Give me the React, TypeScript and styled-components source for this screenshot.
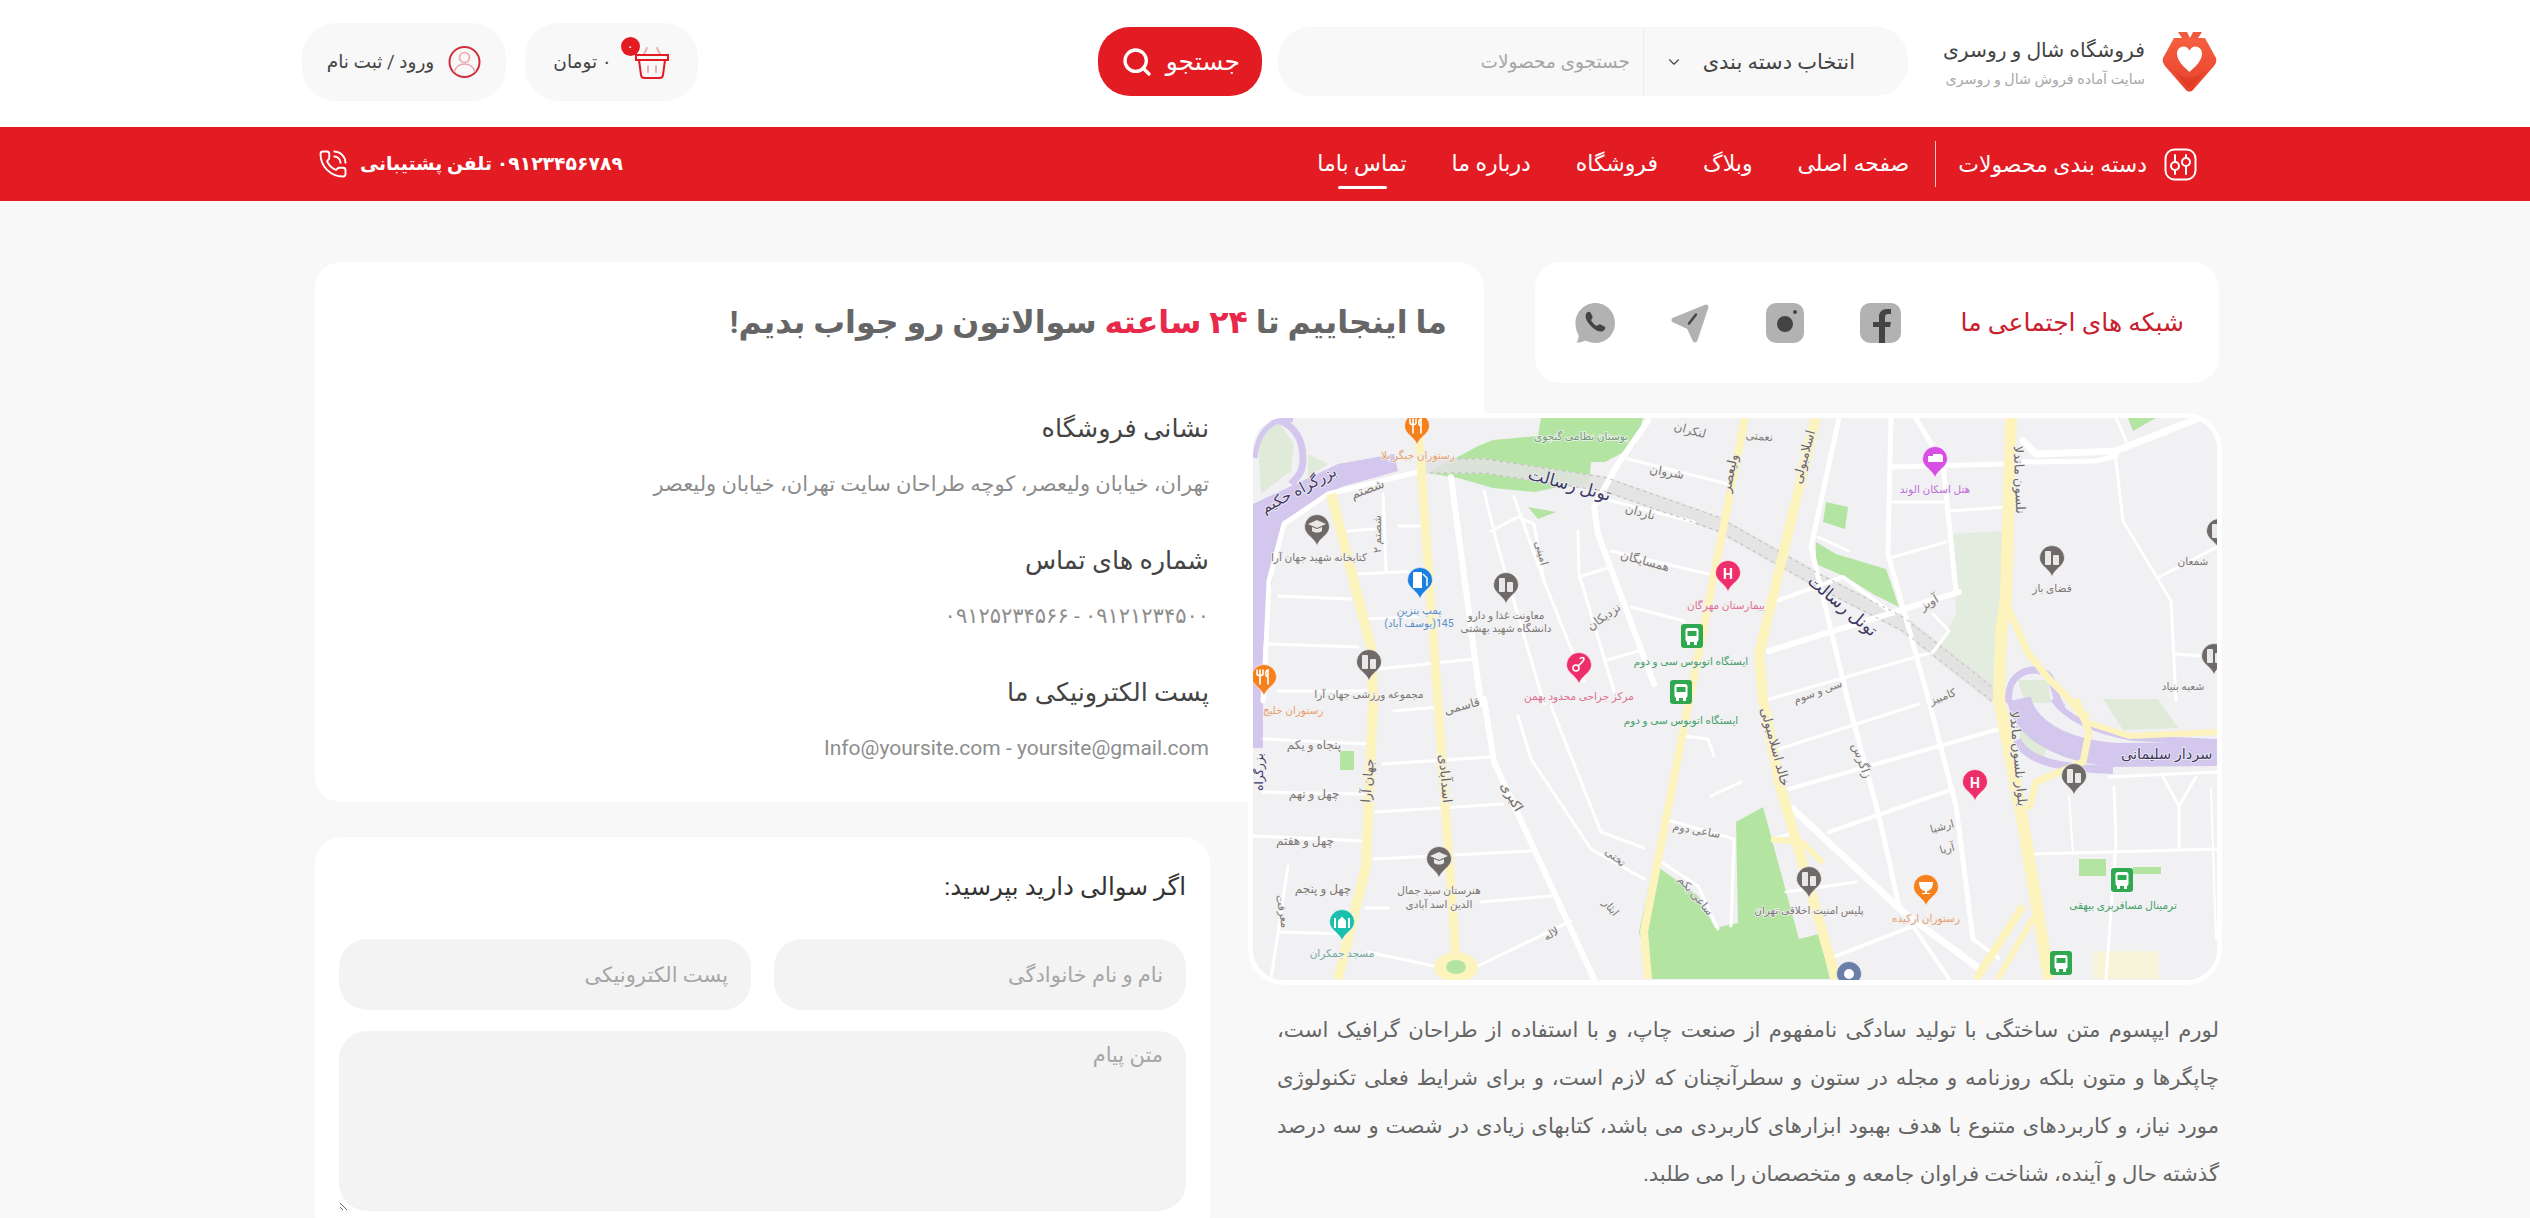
import React from 'react'
import styled, { createGlobalStyle } from 'styled-components'
import { ChevronDown, PhoneCall, Search } from 'lucide-react'

const RED = '#e31b23'
const FONT = `Roboto, "DejaVu Sans", sans-serif`

const GlobalStyle = createGlobalStyle`
  html, body {
    margin: 0;
    padding: 0;
    background: #f8f8f8;
    overflow-x: hidden;
  }
  * {
    box-sizing: border-box;
  }
  body {
    font-family: ${FONT};
    color: #333;
  }
  input::placeholder, textarea::placeholder {
    color: #a6a6a6;
    opacity: 1;
  }
`

const Page = styled.div`
  width: 2530px;
  direction: rtl;
`

const Header = styled.header`
  height: 127px;
  background: #fff;
  display: flex;
  align-items: center;
  padding: 0 313px 4px 302px;
`

const Brand = styled.div`
  display: flex;
  align-items: center;
  gap: 17px;
  width: 272px;

  svg {
    flex: none;
  }
`

const BrandText = styled.div`
  display: flex;
  flex-direction: column;
  gap: 8px;
  min-width: 0;
  white-space: nowrap;
`

const BrandName = styled.div`
  font-size: 20.300px;
  line-height: 26px;
  color: #444;
`

const BrandSub = styled.div`
  font-size: 14.300px;
  line-height: 16px;
  color: #a8a8a8;
`

const SearchBox = styled.div`
  width: 630px;
  height: 69px;
  margin-right: 37px;
  background: #f8f8f8;
  border-radius: 32px;
  display: flex;
  overflow: hidden;
`

const CategorySelect = styled.div`
  width: 265px;
  border-left: 1px solid #eeeeee;
  display: flex;
  align-items: center;
  justify-content: space-between;
  padding: 0 53px 0 21px;
  font-size: 21px;
  color: #444;
  white-space: nowrap;
`

const SearchInput = styled.input`
  flex: 1;
  min-width: 0;
  border: 0;
  outline: 0;
  background: transparent;
  padding: 0 13px;
  font: 18.500px ${FONT};
  direction: rtl;
`

const SearchButton = styled.button`
  width: 164px;
  height: 69px;
  margin-right: 16px;
  border: 0;
  border-radius: 32px;
  background: ${RED};
  color: #fff;
  display: flex;
  align-items: center;
  justify-content: space-between;
  padding: 0 22px 0 23px;
  font: 25px ${FONT};
`

const HeaderPills = styled.div`
  margin-right: auto;
  display: flex;
  gap: 19px;
`

const Pill = styled.div<{ $width: number; $gap: number }>`
  width: ${(p) => p.$width}px;
  height: 78px;
  border-radius: 34px;
  background: #f8f8f8;
  display: flex;
  align-items: center;
  justify-content: center;
  gap: ${(p) => p.$gap}px;
  font-size: 18.500px;
  color: #444;
  white-space: nowrap;
`

const CartWrap = styled.div`
  position: relative;
  width: 36px;
  height: 36px;
`

const CartBadge = styled.span`
  position: absolute;
  top: -7px;
  left: -13px;
  width: 19px;
  height: 19px;
  border-radius: 50%;
  background: ${RED};
  color: #fff;
  font-size: 13px;
  line-height: 19px;
  text-align: center;
`

const NavBar = styled.nav`
  height: 74px;
  background: ${RED};
  color: #fff;
  display: flex;
  align-items: center;
  padding: 0 333px 0 318px;
  font-size: 22px;
  white-space: nowrap;
`

const NavCategories = styled.div`
  display: flex;
  align-items: center;
  gap: 17px;
`

const NavDivider = styled.span`
  width: 1px;
  height: 46px;
  background: rgba(255, 255, 255, 0.75);
  margin: 0 22px 0 26px;
`

const NavLinks = styled.div`
  display: flex;
  gap: 45px;
`

const NavLink = styled.a<{ $active?: boolean }>`
  position: relative;
  line-height: 32px;

  ${(p) =>
    p.$active &&
    `
    &::after {
      content: '';
      position: absolute;
      bottom: -9px;
      left: 50%;
      width: 49px;
      height: 3px;
      margin-left: -24px;
      background: #fff;
      border-radius: 2px;
    }
  `}
`

const SupportPhone = styled.div`
  margin-right: auto;
  display: flex;
  align-items: center;
  gap: 12px;
  font-weight: 700;
  font-size: 18.800px;
`

const Main = styled.main`
  display: grid;
  grid-template-columns: 974px 895px;
  column-gap: 38px;
  justify-content: start;
  padding: 61px 308px 30px 0;
  align-items: start;
`

const RightColumn = styled.section`
  display: flex;
  flex-direction: column;
`

const LeftColumn = styled.section`
  display: flex;
  flex-direction: column;
  gap: 35px;
`

const SocialCard = styled.div`
  width: 684px;
  height: 121px;
  margin-right: 3px;
  background: #fff;
  border-radius: 26px;
  display: flex;
  align-items: center;
  padding-right: 35px;
`

const SocialTitle = styled.h3`
  margin: 0 0 0 60px;
  width: 223px;
  font-size: 25px;
  font-weight: 400;
  color: #c8202d;
  white-space: nowrap;
`

const SocialIcons = styled.div`
  display: flex;
  gap: 55px;
`

const MapFrame = styled.div`
  position: relative;
  z-index: 1;
  margin-top: 30px;
  height: 572px;
  border: 5px solid #fff;
  border-radius: 36px;
  overflow: hidden;
  background: #f1f1f3;

  svg {
    display: block;
  }
`

const MapLabel = styled.text`
  font-family: ${FONT};
  direction: rtl;
  paint-order: stroke;
  stroke: #f1f1f3;
  stroke-width: 1.6px;
`

const Lorem = styled.p`
  margin: 21px 0 0;
  padding: 0 3px 0 29px;
  font-size: 21.200px;
  line-height: 48px;
  color: #666;
  text-align: justify;
`

const HeroCard = styled.div`
  position: relative;
  margin-right: -274px;
  height: 540px;
  background: #fff;
  border-radius: 26px;
  padding: 0 37px 0 0;
`

const HeroTitle = styled.h1`
  margin: 0;
  height: 120px;
  display: flex;
  align-items: center;
  font-size: 31.700px;
  font-weight: 700;
  color: #666;
  white-space: nowrap;

  em {
    font-style: normal;
    color: #e8294a;
  }
`

const InfoList = styled.div`
  margin-top: 16px;
  padding-right: 238px;
  display: flex;
  flex-direction: column;
`

const InfoBlock = styled.div`
  height: 132px;
`

const InfoTitle = styled.h4`
  margin: 0 0 8px;
  font-size: 25.500px;
  line-height: 60px;
  font-weight: 400;
  color: #444;
`

const InfoText = styled.p`
  margin: 0;
  font-size: 21px;
  line-height: 36px;
  color: #8d8d8d;
`

const FormCard = styled.form`
  background: #fff;
  border-radius: 26px;
  padding: 24px 24px 30px;
  display: flex;
  flex-direction: column;
`

const FormTitle = styled.h4`
  margin: 0 0 26px;
  font-size: 24.500px;
  line-height: 52px;
  font-weight: 400;
  color: #333;
`

const FormRow = styled.div`
  display: grid;
  grid-template-columns: 1fr 1fr;
  gap: 23px;
  margin-bottom: 21px;
`

const TextField = styled.input`
  height: 71px;
  border: 0;
  outline: 0;
  border-radius: 28px;
  background: #f3f3f3;
  padding: 0 23px;
  font: 21px ${FONT};
  direction: rtl;
`

const MessageField = styled.textarea`
  height: 180px;
  border: 0;
  outline: 0;
  border-radius: 28px;
  background: #f3f3f3;
  padding: 8px 23px;
  font: 21px/32px ${FONT};
  direction: rtl;
  resize: vertical;
  display: block;
  width: 100%;
`

const Logo = () => (
  <svg width="55" height="60" viewBox="0 0 55 60">
    <defs>
      <linearGradient id="scarf" x1="0" y1="0" x2="0" y2="1">
        <stop offset="0" stopColor="#f4603f" />
        <stop offset="1" stopColor="#e8402c" />
      </linearGradient>
    </defs>
    <path d="M16 0h9l3 6 3-6h9l-6 9H22z" fill="#ef5a3c" />
    <path d="M12 6h31l11 20c1 3 0 5-2 8L31 58c-2 2-5 2-7 0L3 34c-2-3-3-5-2-8z" fill="url(#scarf)" />
    <path d="M12 38c6 6 12 8 16 8s10-2 16-8L31 54c-2 2-5 2-7 0z" fill="#d9371f" opacity=".55" />
    <path d="M27.5 40C22 35 15 29 15 21.500c0-4 3-7 6.500-7 2.500 0 4.500 1.500 6 4 1.500-2.500 3.500-4 6-4 3.500 0 6.500 3 6.500 7C40 29 33 35 27.500 40z" fill="#fff" />
  </svg>
)

const CartIcon = () => (
  <svg width="36" height="36" viewBox="0 0 36 36" fill="none" stroke={RED} strokeWidth="2" strokeLinecap="round">
    <path d="M10 10l3-6M26 10l-3-6" stroke="#efb0b2" />
    <path d="M2 11h32v5H2z" />
    <path d="M5 16l2 15c.2 2 1.500 3 3.500 3h15c2 0 3.300-1 3.500-3l2-15" />
    <path d="M14 22v6M22 22v6" stroke="#efb0b2" />
  </svg>
)

const UserIcon = () => (
  <svg width="33" height="34" viewBox="0 0 33 34" fill="none">
    <circle cx="16.500" cy="17" r="15" stroke="#d02c3a" strokeWidth="2" />
    <circle cx="16.500" cy="12.500" r="5" stroke="#eea8ac" strokeWidth="1.600" />
    <path d="M6 27c2-6 6-8 10.500-8S25 21 27 27" stroke="#eea8ac" strokeWidth="1.600" />
  </svg>
)

const SlidersIcon = () => (
  <svg width="33" height="33" viewBox="0 0 33 33" fill="none" stroke="#fff" strokeWidth="2" strokeLinecap="round">
    <rect x="1.500" y="1.500" width="30" height="30" rx="9" />
    <path d="M11 7v6M11 23v3M22 7v2M22 19v7" />
    <circle cx="11" cy="18" r="4" />
    <circle cx="22" cy="14" r="4" />
  </svg>
)

const WhatsappIcon = () => (
  <svg width="40" height="40" viewBox="0 0 40 40">
    <path d="M20.500 0C31.500 0 40 9 40 20s-8.500 20-19.500 20c-4 0-7-1-10-2.500-2 1-6 2.500-9 2 1.500-2 2.500-5 2-7.500C1.500 29 .5 24.500.5 20 .5 9 9.500 0 20.500 0z" fill="#b2b2b2" />
    <path d="M11 11c1-2 3.500-3 4.500-1.500l2 4c.5 1-.5 2.500-1.500 3.500 1 2.500 3.500 5 6 6 1-1 2.500-2 3.500-1.500l4 2c1.500 1 .5 3.500-1.500 4.500-3 1.500-6.500 0-10.500-3.500C12.500 20 9.500 15 11 11z" fill="#444" />
  </svg>
)

const TelegramIcon = () => (
  <svg width="40" height="40" viewBox="0 0 40 40">
    <path d="M4 17L36 4 25 37l-6-13z" fill="#b2b2b2" stroke="#b2b2b2" strokeWidth="5" strokeLinejoin="round" />
    <path d="M19 20.500l7-9" stroke="#444" strokeWidth="2.400" strokeLinecap="round" />
  </svg>
)

const InstagramIcon = () => (
  <svg width="40" height="40" viewBox="0 0 40 40">
    <rect x="1" width="38" height="40" rx="10" fill="#b2b2b2" />
    <circle cx="20" cy="21" r="8" fill="#444" />
    <circle cx="30" cy="9" r="2" fill="#444" />
  </svg>
)

const FacebookIcon = () => (
  <svg width="41" height="40" viewBox="0 0 41 40">
    <rect width="41" height="40" rx="10" fill="#b2b2b2" />
    <path d="M19 40V24h-6v-5h6v-5c0-5 3-8 8-8h4v5h-3c-2 0-3 1-3 3v5h6l-1 5h-5v16z" fill="#444" />
  </svg>
)

// map data, in px of the map box (964 x 562)
const purple = '#d3c7ee'
const yellow = '#fcf3bd'
const green = '#b4e4a2'
const paleGreen = '#dfead8'

const greens: [string, string][] = [
  ['288,0 390,0 382,28 352,44 338,44 336,66 310,68 282,74 240,70 205,60 175,55 225,28 240,22 285,18', green],
  ['275,89 303,94 285,101', green],
  ['573,84 595,89 592,111 570,104', green],
  ['563,124 583,136 633,151 646,189 620,176 593,159 563,146', green],
  ['875,0 903,0 880,13', green],
  ['87,333 101,333 101,352 87,352', green],
  ['401,446 445,478 462,510 485,505 483,404 510,389 546,521 566,516 577,561 398,561 386,514', green],
  ['826,441 853,441 853,458 826,458', green],
  ['880,449 908,449 908,456 880,456', green],
  ['700,116 750,113 746,203 746,283 683,236 703,196', '#e2ecdf'],
  ['5,19 25,3 41,26 38,53 8,76', paleGreen],
  ['55,36 75,46 55,59', paleGreen],
  ['766,300 800,318 790,340 768,335', paleGreen],
  ['850,281 905,281 925,310 870,312', paleGreen],
  ['840,533 906,533 906,561 840,561', '#f6f3d8'],
  ['765,262 795,262 798,285 772,285', paleGreen],
]

const purples = ['0,86 85,46 141,36 145,53 88,69 30,103 20,156 10,230 10,330 0,330']

const purpleLines: [string, number][] = [
  ['M8 0C40 0 50 20 50 40C50 55 45 58 38 66', 7],
  ['M2 40C4 16 16 0 40 2', 5],
  ['M756 285C752 255 780 245 795 257C803 265 800 280 810 290', 7],
  ['M766 281C772 310 805 332 862 337L964 336', 24],
  ['M800 281C812 298 835 312 880 320L964 324', 6],
  ['M764 322C775 345 810 350 860 352', 8],
]

const yellows: [string, number][] = [
  ['78,76 118,229 120,286 113,448 85,561', 10],
  ['166,20 185,286 203,540', 9],
  ['492,0 438,273 391,514 395,561', 8],
  ['563,0 506,236 510,281 526,364 583,561', 10],
  ['758,0 753,179 748,215 746,281 769,400 796,561', 12],
  ['753,185 775,235 795,260 835,300', 7],
  ['816,281 833,304 876,318 964,314', 6],
  ['823,281 836,314 830,344 783,364 776,391', 7],
  ['723,561 770,488', 8],
  ['745,561 780,500', 6],
  ['518,421 550,425 570,445', 6],
]

const roads: [string, number][] = [
  ['165,54 75,76 31,106 16,163 13,229 10,283', 5],
  ['198,59 228,286 231,281 241,344 341,561', 6],
  ['231,73 245,129 291,286', 3],
  ['265,298 278,341 338,431 391,461', 3],
  ['261,79 291,163 331,263', 3],
  ['298,288 348,414 391,430', 3],
  ['238,113 265,99 281,106 291,163', 3],
  ['395,3 365,46 341,89 345,116 401,266', 6],
  ['325,113 326,156 361,273', 3],
  ['375,41 475,66', 3],
  ['351,81 441,104', 3],
  ['358,133 455,156', 3],
  ['326,159 358,149', 3],
  ['378,189 431,203', 3],
  ['351,243 385,233', 3],
  ['95,113 121,111', 3],
  ['146,108 168,108', 3],
  ['130,76 133,153', 3],
  ['103,156 168,153', 3],
  ['26,178 98,181', 3],
  ['15,226 105,229', 3],
  ['125,251 221,241', 3],
  ['108,201 165,199', 3],
  ['25,273 115,273', 3],
  ['11,321 115,326', 3],
  ['130,346 237,339', 3],
  ['10,374 110,376', 3],
  ['123,394 250,386', 3],
  ['0,418 110,423', 3],
  ['121,441 278,433', 3],
  ['113,490 135,490', 3],
  ['228,484 298,478', 3],
  ['26,514 98,516', 3],
  ['35,448 18,561', 3],
  ['115,534 181,548', 3],
  ['225,548 318,503', 3],
  ['141,293 185,289', 3],
  ['411,401 481,421 478,508', 3],
  ['458,378 488,364', 3],
  ['408,444 445,468 465,511', 3],
  ['431,318 455,321 461,338', 3],
  ['586,0 558,129 595,283 626,398 646,488', 5],
  ['638,0 635,136 676,283 703,388 720,521', 5],
  ['663,0 690,46 703,173', 5],
  ['640,49 750,46', 5],
  ['640,84 690,84', 3],
  ['696,93 753,89', 3],
  ['640,139 693,124', 3],
  ['516,233 706,174', 6],
  ['523,183 590,159 640,196', 4],
  ['565,119 596,133', 3],
  ['680,196 696,213 680,234 510,283', 3],
  ['526,331 666,286', 3],
  ['536,371 746,311', 4],
  ['576,414 700,371', 4],
  ['520,421 536,416', 3],
  ['540,391 650,494 723,548', 7],
  ['583,538 660,508', 4],
  ['533,474 603,464', 3],
  ['660,508 696,561', 4],
  ['720,521 745,540', 4],
  ['770,23 783,36 863,33 946,0', 7],
  ['770,44 843,43 863,38', 5],
  ['863,43 870,103 918,183 923,283', 3],
  ['863,0 873,23', 3],
  ['906,159 964,129', 3],
  ['923,236 950,238', 3],
  ['781,436 964,431', 3],
  ['816,378 820,436', 2],
  ['861,369 863,424 853,561', 3],
  ['958,371 963,521', 2],
  ['856,359 964,354', 3],
  ['910,359 926,388 943,359', 3],
  ['926,388 926,431', 3],
]

type LabelData = [string, number, number, number, number, string]
const DARK = '#3f3763'
const GREY = '#7d7773'
const labels: LabelData[] = [
  ['رستوران جیگر بلا', 165, 41, 0, 10.5, '#e6a06c'],
  ['بوستان نظامی گنجوی', 328, 22, 0, 10.5, '#6f9a70'],
  ['لنکران', 436, 16, 15, 12, GREY],
  ['شروان', 413, 58, 10, 12, GREY],
  ['تونل رسالت', 315, 72, 15, 17, DARK],
  ['ناردان', 386, 98, 15, 12, GREY],
  ['همسایگان', 391, 147, 15, 12, GREY],
  ['نزدیکان', 353, 202, -35, 12, GREY],
  ['امینی', 285, 136, 75, 11, GREY],
  ['معاونت غذا و دارو', 253, 201, 0, 10.5, GREY],
  ['دانشگاه شهید بهشتی', 253, 214, 0, 10.5, GREY],
  ['پمپ بنزین', 166, 196, 0, 10.5, '#5b8fc7'],
  ['145(یوسف آباد)', 166, 209, 0, 10.5, '#5b8fc7'],
  ['کتابخانه شهید جهان آرا', 66, 143, 0, 10.5, GREY],
  ['شصتم', 116, 75, -20, 13, GREY],
  ['شصتم ۲', 128, 116, -90, 11, GREY],
  ['بزرگراه حکیم', 48, 76, -28, 15, DARK],
  ['مجموعه ورزشی جهان آرا', 116, 280, 0, 10.5, GREY],
  ['مرکز جراحی محدود بهمن', 326, 282, 0, 10.5, '#e0708f'],
  ['بیمارستان مهرگان', 473, 191, 0, 10.5, '#e0708f'],
  ['ایستگاه اتوبوس سی و دوم', 438, 247, 0, 10.5, '#45a06a'],
  ['ایستگاه اتوبوس سی و دوم', 428, 306, 0, 10.5, '#45a06a'],
  ['ولیعصر', 481, 56, -78, 13, '#6d655c'],
  ['اسلامبولی', 555, 40, -75, 13, '#6d655c'],
  ['نعمتی', 506, 22, 5, 11, GREY],
  ['هتل اسکان الوند', 682, 75, 0, 10.5, '#c06fd6'],
  ['تونل رسالت', 586, 192, 40, 17, DARK],
  ['آویز', 678, 188, -30, 12, GREY],
  ['فضای باز', 799, 174, 0, 10.5, GREY],
  ['سی و سوم', 566, 277, -20, 11, GREY],
  ['نلسون ماندلا', 762, 62, 88, 13, '#6d655c'],
  ['جهان آرا', 119, 363, -85, 13, '#6d655c'],
  ['اسدآبادی', 188, 361, 85, 13, '#6d655c'],
  ['اکبری', 255, 381, 60, 13, '#6d655c'],
  ['پنجاه و یکم', 61, 331, 0, 12, GREY],
  ['چهل و نهم', 61, 380, 0, 12, GREY],
  ['چهل و هفتم', 52, 427, 0, 12, GREY],
  ['چهل و پنجم', 70, 475, 0, 12, GREY],
  ['معرفت', 26, 494, 80, 11, GREY],
  ['قاسمی', 210, 292, -15, 12, GREY],
  ['هنرستان سید جمال', 186, 476, 0, 10.5, GREY],
  ['الدین اسد آبادی', 186, 490, 0, 10.5, GREY],
  ['مسجد جمکران', 89, 539, 0, 10.5, '#72aaa2'],
  ['لاله', 300, 519, -30, 11, GREY],
  ['ایثار', 355, 492, 50, 11, GREY],
  ['تختی', 360, 442, 40, 11, GREY],
  ['ساعی یکم', 440, 480, 50, 11, GREY],
  ['ساعی دوم', 443, 416, 10, 11, GREY],
  ['رستوران خلیج', 40, 296, 0, 10.5, '#e6a06c'],
  ['خالد اسلامبولی', 518, 330, 75, 13, '#6d655c'],
  ['بلوار نلسون ماندلا', 761, 341, 85, 13, '#6d655c'],
  ['زاگرس', 605, 344, 70, 12, GREY],
  ['کامبیز', 691, 282, -20, 11, GREY],
  ['ارشیا', 690, 412, -15, 11, GREY],
  ['آریا', 695, 434, -15, 11, GREY],
  ['پلیس امنیت اخلاقی تهران', 556, 496, 0, 10.5, GREY],
  ['رستوران ارکیده', 673, 504, 0, 10.5, '#e6a06c'],
  ['ترمینال مسافربری بیهقی', 870, 491, 0, 10.5, '#45a06a'],
  ['شمعان', 940, 147, 0, 10.5, GREY],
  ['شعبه بنیاد', 930, 272, 0, 10.5, GREY],
]

const Glyph = ({ kind }: { kind: string }) => {
  switch (kind) {
    case 'building':
      return (
        <g fill="#e8e8e8">
          <rect x="-7" y="-7" width="6" height="14" rx="1" />
          <rect x="1" y="-3" width="6" height="10" rx="1" />
        </g>
      )
    case 'cap':
      return (
        <g fill="#e8e8e8">
          <path d="M-9-3L0-7l9 4-9 4z" />
          <path d="M-5 0v4c3 2 7 2 10 0V0L0 2z" />
        </g>
      )
    case 'fork':
      return (
        <g stroke="#fff" strokeWidth="1.600" fill="none" strokeLinecap="round">
          <path d="M-4-7v14M-7-7v4c0 2 6 2 6 0v-4" />
          <path d="M4 7V-7c-3 1-3 6 0 7" />
        </g>
      )
    case 'gas':
      return (
        <g fill="#fff">
          <path d="M-7-7a1 1 0 0 1 1-1h7a1 1 0 0 1 1 1V8H-7z" />
          <path d="M3-6l4 4v8" stroke="#fff" strokeWidth="1.500" fill="none" />
        </g>
      )
    case 'bed':
      return <path d="M-7 3V-3h5v-2h7c2 0 3 1 3 3v5z" fill="#fff" />
    case 'mosque':
      return (
        <g fill="#fff">
          <path d="M-4 6V0C-4-3 0-4 0-6 0-4 4-3 4 0v6z" />
          <rect x="-8" y="-4" width="2" height="10" />
          <rect x="6" y="-4" width="2" height="10" />
        </g>
      )
    case 'cup':
      return <path d="M-7-5H7C7 2 3 4 1 4v2h3v1h-8V6h3V4C-3 4-7 2-7-5z" fill="#fff" />
    case 'steth':
      return (
        <g stroke="#fff" strokeWidth="1.600" fill="none">
          <circle cx="-3" cy="3" r="3" />
          <path d="M-1 1c3-3 6-5 6-7s-3-2-4 0" />
        </g>
      )
    default:
      return (
        <text y="5.500" textAnchor="middle" fontSize="14" fontWeight="700" fill="#fff" fontFamily="Roboto">
          H
        </text>
      )
  }
}

const pins: [number, number, string, string][] = [
  [164, 8, '#f5801e', 'fork'],
  [64, 109, '#6f6a68', 'cap'],
  [167, 162, '#1a7fe0', 'gas'],
  [253, 167, '#6f6a68', 'building'],
  [475, 155, '#ee2e6b', 'h'],
  [116, 244, '#6f6a68', 'building'],
  [11, 259, '#f5801e', 'fork'],
  [326, 247, '#ee2e6b', 'steth'],
  [682, 41, '#d84fe6', 'bed'],
  [799, 140, '#6f6a68', 'building'],
  [966, 113, '#6f6a68', 'building'],
  [961, 238, '#6f6a68', 'building'],
  [722, 364, '#ee2e6b', 'h'],
  [821, 358, '#6f6a68', 'building'],
  [186, 441, '#6f6a68', 'cap'],
  [89, 504, '#1bbfae', 'mosque'],
  [556, 461, '#6f6a68', 'building'],
  [673, 469, '#f5801e', 'cup'],
  [596, 556, '#6a7ea8', 'dot'],
]

const busStops: [number, number][] = [
  [439, 218],
  [428, 274],
  [869, 462],
  [808, 545],
]

const Pin = ({ x, y, color, kind }: { x: number; y: number; color: string; kind: string }) => (
  <g transform={`translate(${x} ${y})`}>
    <path d="M-12.500 0A12.500 12.500 0 1 1 12.500 0C12.500 8 2 11 0 19-2 11-12.500 8-12.500 0z" fill={color} stroke="#fff" strokeOpacity=".6" />
    {kind === 'dot' ? <circle r="5" fill="#fff" /> : <Glyph kind={kind} />}
  </g>
)

const BusStop = ({ x, y }: { x: number; y: number }) => (
  <g transform={`translate(${x} ${y})`}>
    <rect x="-11" y="-12" width="22" height="24" rx="3" fill="#2fa84f" />
    <rect x="-6.500" y="-8" width="13" height="14" rx="2.500" fill="#fff" />
    <rect x="-4.500" y="-5" width="9" height="5" fill="#2fa84f" />
    <rect x="-5" y="6" width="3" height="3" fill="#fff" />
    <rect x="2" y="6" width="3" height="3" fill="#fff" />
  </g>
)

const TUNNEL = 'M170 48L231 48L351 66L465 106L566 163L650 206L743 279'

const TehranMap = () => (
  <svg width="964" height="562" viewBox="0 0 964 562">
    <rect width="964" height="562" fill="#f1f1f3" />
    {greens.map(([points, fill], i) => (
      <polygon key={i} points={points} fill={fill} />
    ))}
    {purples.map((points, i) => (
      <polygon key={i} points={points} fill={purple} />
    ))}
    {purpleLines.map(([d, w], i) => (
      <path key={i} d={d} fill="none" stroke={purple} strokeWidth={w} />
    ))}
    <path d={TUNNEL} fill="none" stroke="#e2e2e2" strokeWidth="15" opacity=".85" />
    {roads.map(([points, w], i) => (
      <polyline key={i} points={points} fill="none" stroke="#fff" strokeWidth={w} strokeLinejoin="round" strokeLinecap="round" />
    ))}
    <path d={TUNNEL} transform="translate(0 -7)" fill="none" stroke="#b9b9b9" strokeDasharray="3 4" />
    <path d={TUNNEL} transform="translate(0 7)" fill="none" stroke="#b9b9b9" strokeDasharray="3 4" />
    {yellows.map(([points, w], i) => (
      <polyline key={i} points={points} fill="none" stroke={yellow} strokeWidth={w} strokeLinejoin="round" />
    ))}
    <ellipse cx="203" cy="549" rx="22" ry="15" fill={yellow} />
    <ellipse cx="203" cy="549" rx="10" ry="7" fill={green} />
    {labels.map(([text, x, y, rotate, size, fill], i) => (
      <MapLabel key={i} x={x} y={y} textAnchor="middle" fontSize={size} fill={fill} transform={`rotate(${rotate} ${x} ${y})`}>
        {text}
      </MapLabel>
    ))}
    <MapLabel x={868} y={341} textAnchor="end" fontSize={14.5} fill={DARK}>
      سردار سلیمانی
    </MapLabel>
    <MapLabel x={10} y={354} textAnchor="middle" fontSize={12} fill={DARK} transform="rotate(-90 10 354)">
      بزرگراه
    </MapLabel>
    {pins.map(([x, y, color, kind], i) => (
      <Pin key={i} x={x} y={y} color={color} kind={kind} />
    ))}
    {busStops.map(([x, y], i) => (
      <BusStop key={i} x={x} y={y} />
    ))}
  </svg>
)

const navItems = ['صفحه اصلی', 'وبلاگ', 'فروشگاه', 'درباره ما', 'تماس باما']

export default function App() {
  return (
    <Page>
      <GlobalStyle />
      <Header>
        <Brand>
          <Logo />
          <BrandText>
            <BrandName>فروشگاه شال و روسری</BrandName>
            <BrandSub>سایت آماده فروش شال و روسری</BrandSub>
          </BrandText>
        </Brand>
        <SearchBox>
          <CategorySelect>
            انتخاب دسته بندی
            <ChevronDown size={18} strokeWidth={1.5} />
          </CategorySelect>
          <SearchInput placeholder="جستجوی محصولات" />
        </SearchBox>
        <SearchButton type="button">
          جستجو
          <Search size={32} strokeWidth={2.5} />
        </SearchButton>
        <HeaderPills>
          <Pill $width={173} $gap={22}>
            <CartWrap>
              <CartIcon />
              <CartBadge>۰</CartBadge>
            </CartWrap>
            ۰ تومان
          </Pill>
          <Pill $width={204} $gap={14}>
            <UserIcon />
            ورود / ثبت نام
          </Pill>
        </HeaderPills>
      </Header>

      <NavBar>
        <NavCategories>
          <SlidersIcon />
          دسته بندی محصولات
        </NavCategories>
        <NavDivider />
        <NavLinks>
          {navItems.map((item, i) => (
            <NavLink key={item} $active={i === navItems.length - 1}>
              {item}
            </NavLink>
          ))}
        </NavLinks>
        <SupportPhone>
          ۰۹۱۲۳۴۵۶۷۸۹ تلفن پشتیبانی
          <PhoneCall size={30} strokeWidth={1.5} />
        </SupportPhone>
      </NavBar>

      <Main>
        <RightColumn>
          <SocialCard>
            <SocialTitle>شبکه های اجتماعی ما</SocialTitle>
            <SocialIcons>
              <FacebookIcon />
              <InstagramIcon />
              <TelegramIcon />
              <WhatsappIcon />
            </SocialIcons>
          </SocialCard>
          <MapFrame>
            <TehranMap />
          </MapFrame>
          <Lorem>
            لورم ایپسوم متن ساختگی با تولید سادگی نامفهوم از صنعت چاپ، و با استفاده از طراحان گرافیک است، چاپگرها و متون بلکه روزنامه و مجله در ستون و سطرآنچنان که لازم است، و برای شرایط فعلی تکنولوژی مورد نیاز، و کاربردهای متنوع با هدف بهبود ابزارهای کاربردی می باشد، کتابهای زیادی در شصت و سه درصد گذشته حال و آینده، شناخت فراوان جامعه و متخصصان را می طلبد.
          </Lorem>
        </RightColumn>

        <LeftColumn>
          <HeroCard>
            <HeroTitle>
              <span>
                ما اینجاییم تا <em>۲۴ ساعته</em> سوالاتون رو جواب بدیم!
              </span>
            </HeroTitle>
            <InfoList>
              <InfoBlock>
                <InfoTitle>نشانی فروشگاه</InfoTitle>
                <InfoText>تهران، خیابان ولیعصر، کوچه طراحان سایت تهران، خیابان ولیعصر</InfoText>
              </InfoBlock>
              <InfoBlock>
                <InfoTitle>شماره های تماس</InfoTitle>
                <InfoText>۰۹۱۲۱۲۳۴۵۰۰ - ۰۹۱۲۵۲۳۴۵۶۶</InfoText>
              </InfoBlock>
              <InfoBlock>
                <InfoTitle>پست الکترونیکی ما</InfoTitle>
                <InfoText>Info@yoursite.com - yoursite@gmail.com</InfoText>
              </InfoBlock>
            </InfoList>
          </HeroCard>

          <FormCard>
            <FormTitle>اگر سوالی دارید بپرسید:</FormTitle>
            <FormRow>
              <TextField placeholder="نام و نام خانوادگی" />
              <TextField placeholder="پست الکترونیکی" />
            </FormRow>
            <MessageField placeholder="متن پیام" />
          </FormCard>
        </LeftColumn>
      </Main>
    </Page>
  )
}
